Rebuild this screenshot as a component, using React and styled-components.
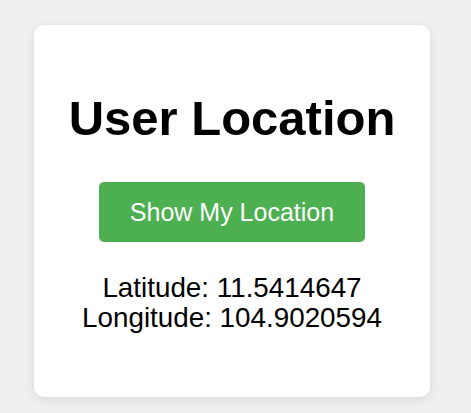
import React, { useState } from "react";
import styled, { createGlobalStyle } from "styled-components";

const GlobalStyle = createGlobalStyle`
  html, body {
    margin: 0;
    padding: 0;
    background-color: #efefef;
    font-family: "Liberation Sans", Arial, sans-serif;
  }
`;

const Page = styled.div`
  display: flex;
  align-items: flex-start;
  padding: 25px 0 0 34px;
  min-height: 413px;
  box-sizing: border-box;
`;

const Card = styled.div`
  width: 396px;
  height: 372px;
  box-sizing: border-box;
  background-color: #fff;
  border-radius: 10px;
  box-shadow: 0 2px 8px rgba(0, 0, 0, 0.1);
  padding-top: 65px;
  display: flex;
  flex-direction: column;
  align-items: center;
  text-align: center;
`;

const Title = styled.h1`
  margin: 0;
  font-size: 49px;
  font-weight: 700;
  color: #000;
`;

const LocateButton = styled.button`
  margin-top: 36px;
  width: 266px;
  height: 60px;
  border: none;
  border-radius: 5px;
  background-color: #4caf50;
  color: #fff;
  font-family: "Liberation Sans", Arial, sans-serif;
  font-size: 25px;
  cursor: pointer;
`;

const Coords = styled.p`
  margin: 31px 0 0;
  font-size: 27.8px;
  line-height: 30px;
  color: #000;
`;

export default function App() {
  const [coords] = useState({ lat: 11.5414647, lng: 104.9020594 });

  return (
    <>
      <GlobalStyle />
      <Page>
        <Card>
          <Title>User Location</Title>
          <LocateButton>Show My Location</LocateButton>
          <Coords>
            Latitude: {coords.lat}
            <br />
            Longitude: {coords.lng}
          </Coords>
        </Card>
      </Page>
    </>
  );
}
